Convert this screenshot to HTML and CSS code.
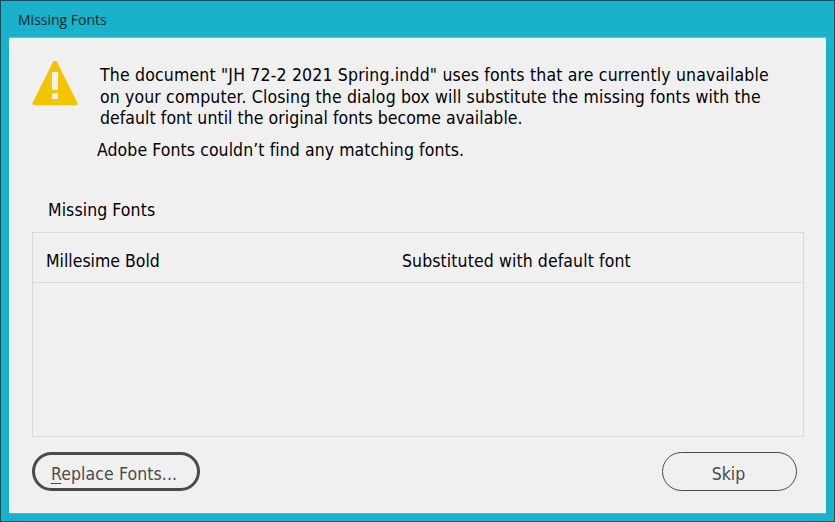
FILE: index.html
```
<!DOCTYPE html>
<html lang="en">
<head>
    <meta charset="UTF-8">
    <meta name="viewport" content="width=device-width, initial-scale=1.0">
    <title>Missing Fonts</title>
    <link rel="stylesheet" href="styles.css">
</head>
<body>
    <div class="window">
        <header class="title-bar">Missing Fonts</header>

        <main class="dialog">
            <!-- Warning message -->
            <section class="message">
                <svg class="warning-icon" width="46" height="45" viewBox="0 0 46 45">
                    <path d="M20.8 1.2Q21.4 0 22.6 0h.8Q24.6 0 25.2 1.2L45.3 41.4Q46.3 44 43.8 44.2H2.2Q-.3 44 .7 41.4Z" fill="#f5c400"/>
                    <path d="M20 11h6v18h-6zM20 32.3h6v5.7h-6z" fill="#f0f0f0"/>
                </svg>
                <div class="message-text">
                    <p class="warning">
                        <span class="line-1">The document "JH 72-2 2021 Spring.indd" uses fonts that are currently unavailable</span><br>
                        <span class="line-2">on your computer. Closing the dialog box will substitute the missing fonts with the</span><br>
                        <span class="line-3">default font until the original fonts become available.</span>
                    </p>
                    <p class="status">Adobe Fonts couldn’t find any matching fonts.</p>
                </div>
            </section>

            <!-- Font list -->
            <h2 class="list-title">Missing Fonts</h2>
            <div class="font-list">
                <div class="font-row">
                    <span class="font-name">Millesime Bold</span>
                    <span class="font-status">Substituted with default font</span>
                </div>
            </div>

            <!-- Buttons -->
            <footer class="buttons">
                <button class="btn btn-primary"><span class="key">R</span>eplace Fonts...</button>
                <button class="btn btn-skip">Skip</button>
            </footer>
        </main>
    </div>
</body>
</html>
```
FILE: styles.css
```
* {
    box-sizing: border-box;
}

body {
    margin: 0;
    font-family: "DejaVu Sans Condensed", "DejaVu Sans", sans-serif;
    font-stretch: condensed;
    font-size: 17.5px;
    color: #000;
}

.window {
    display: flex;
    flex-direction: column;
    width: 835px;
    height: 522px;
    padding: 0 8px 7px;
    background: #1ab1ca;
    border: 1px solid #124e5c;
}

.title-bar {
    height: 36px;
    padding-left: 9px;
    font-family: "Open Sans", sans-serif;
    font-stretch: normal;
    font-size: 14px;
    line-height: 37px;
    color: #06262c;
}

.dialog {
    flex: 1;
    display: flex;
    flex-direction: column;
    padding: 0 22px 22px 23px;
    background: #f0f0f0;
    border-top: 1px solid #7fbcc6;
    border-bottom: 1px solid #6fa9b5;
}

.message {
    display: flex;
    height: 153px;
    padding-top: 23px;
}

.warning-icon {
    flex: none;
}

.message-text {
    margin-left: 19px;
    padding-top: 4px;
    white-space: nowrap;
}

.warning {
    margin: 0 0 0 3px;
    line-height: 21.5px;
}

.line-1 {
    letter-spacing: 0.17px;
}

.line-2 {
    letter-spacing: 0.14px;
}

.line-3 {
    letter-spacing: 0.05px;
}

.status {
    margin: 9px 0 0;
    line-height: 22px;
    letter-spacing: 0.08px;
}

.list-title {
    margin: 8px 0 0 16px;
    font-size: 17.5px;
    font-weight: normal;
    line-height: 22px;
    letter-spacing: 0.08px;
}

.font-list {
    width: 772px;
    height: 205px;
    margin-top: 11px;
    border: 1px solid #d9d9d9;
}

.font-row {
    display: flex;
    height: 50px;
    padding-top: 6px;
    padding-left: 13px;
    line-height: 44px;
    border-bottom: 1px solid #d9d9d9;
}

.font-name {
    width: 356px;
}

.font-status {
    letter-spacing: 0.1px;
}

.buttons {
    display: flex;
    justify-content: space-between;
    width: 765px;
    margin-top: 15px;
}

.btn {
    height: 39px;
    padding: 5px 0 0;
    font-family: inherit;
    font-stretch: inherit;
    font-size: 17.5px;
    color: #4a4a4a;
    background: transparent;
    border-radius: 20px;
}

.btn-primary {
    width: 168px;
    padding-right: 4px;
    letter-spacing: 0.1px;
    border: 3px solid #4a4a4a;
}

.btn-skip {
    width: 135px;
    padding-right: 2px;
    border: 1px solid #4a4a4a;
}

.key {
    text-decoration: underline;
    text-decoration-thickness: 1px;
    text-underline-offset: 3px;
}
```
